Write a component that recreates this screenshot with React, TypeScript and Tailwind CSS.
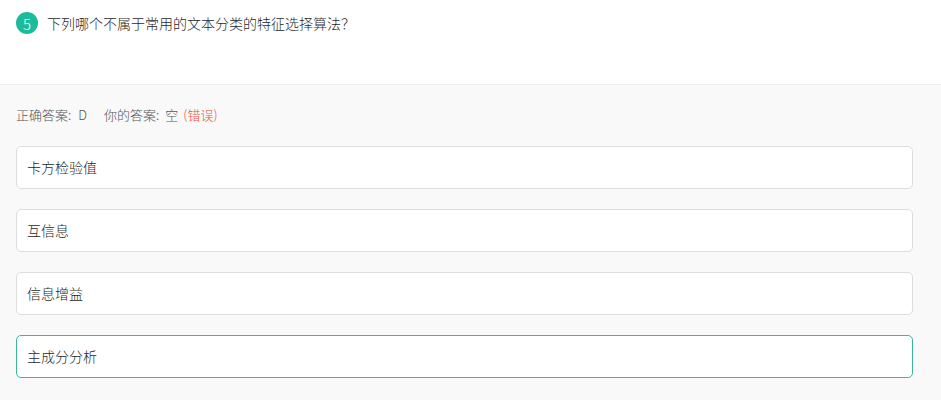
export default function App() {
  const options = [
    { key: 'A', text: '卡方检验值' },
    { key: 'B', text: '互信息' },
    { key: 'C', text: '信息增益' },
    { key: 'D', text: '主成分分析' },
  ]
  const correct = 'D'

  return (
    <div
      className="w-[941px] h-[400px] bg-[#f9f9f9] overflow-hidden font-light"
      style={{ fontFamily: '"Microsoft YaHei", "Noto Sans CJK SC", sans-serif' }}
    >
      {/* Question header */}
      <div className="h-[85px] bg-white border-b border-[#eeeeee] px-4 pt-3">
        <div className="flex items-center gap-[9px]">
          <span className="w-[22px] h-[22px] rounded-full bg-[#1abc9c] text-white text-[15px] leading-none flex items-center justify-center">
            5
          </span>
          <span className="text-[14px] text-[#1f1f1f]">下列哪个不属于常用的文本分类的特征选择算法？</span>
        </div>
      </div>

      {/* Answer area */}
      <div className="pl-4 pr-[28px] pt-[20px]">
        <div className="text-[13px] text-[#555555] h-[20px] leading-[20px] flex">
          <span>正确答案:</span>
          <span className="ml-[7px]">D</span>
          <span className="ml-[17px]">你的答案:</span>
          <span className="ml-[6px]">空</span>
          <span className="ml-[5px] text-[#e9503f]">(错误)</span>
        </div>
        <div className="mt-[21px] flex flex-col gap-[20px]">
          {options.map((o) => (
            <div
              key={o.key}
              className={`h-[43px] rounded-[5px] bg-white border flex items-center px-[10px] text-[14px] text-[#1f1f1f] ${
                o.key === correct ? 'border-[#3bb89c]' : 'border-[#dddddd]'
              }`}
            >
              {o.text}
            </div>
          ))}
        </div>
      </div>
    </div>
  )
}
